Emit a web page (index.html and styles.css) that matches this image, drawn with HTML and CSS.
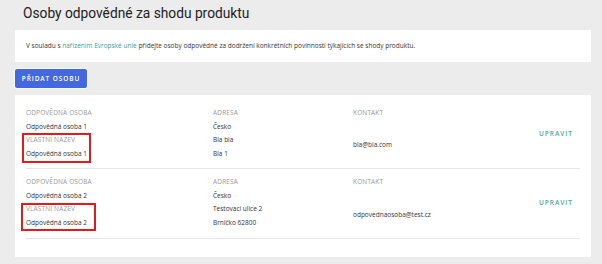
FILE: index.html
```html
<!DOCTYPE html>
<html lang="cs">
    <head>
        <meta charset="UTF-8" />
        <meta name="viewport" content="width=device-width, initial-scale=1.0" />
        <title>Osoby odpovědné za shodu produktu</title>

        <link rel="stylesheet" href="styles.css">
    </head>
    <body>
        <h1 class="page-title">Osoby odpovědné za shodu produktu</h1>

        <div class="panel info">
            V souladu s <a href="#">nařízením Evropské unie</a> přidejte
            osoby odpovědné za dodržení konkrétních povinností týkajících se
            shody produktu.
        </div>

        <button class="add-btn">Přidat osobu</button>

        <div class="panel persons">
            <div class="person">
                <div class="col col-name">
                    <div class="label">Odpovědná osoba</div>
                    <div class="value">Odpovědná osoba 1</div>
                    <div class="mark mark-1">
                        <div class="label">Vlastní název</div>
                        <div class="value">Odpovědná osoba 1</div>
                    </div>
                </div>
                <div class="col col-address">
                    <div class="label">Adresa</div>
                    <div class="value">Česko</div>
                    <div class="value">Bla bla</div>
                    <div class="value">Bla 1</div>
                </div>
                <div class="col col-contact">
                    <div class="label">Kontakt</div>
                    <div class="value email">bla@bla.com</div>
                </div>
                <a class="edit" href="#">Upravit</a>
            </div>

            <div class="person">
                <div class="col col-name">
                    <div class="label">Odpovědná osoba</div>
                    <div class="value">Odpovědná osoba 2</div>
                    <div class="mark mark-2">
                        <div class="label">Vlastní název</div>
                        <div class="value">Odpovědná osoba 2</div>
                    </div>
                </div>
                <div class="col col-address">
                    <div class="label">Adresa</div>
                    <div class="value">Česko</div>
                    <div class="value">Testovací ulice 2</div>
                    <div class="value">Brníčko 62800</div>
                </div>
                <div class="col col-contact">
                    <div class="label">Kontakt</div>
                    <div class="value email">odpovednaosoba@test.cz</div>
                </div>
                <a class="edit" href="#">Upravit</a>
            </div>
        </div>
    </body>
</html>
```

FILE: styles.css
```css
body {
    margin: 0;
    padding: 0 11px 0 15px;
    background: #ececec;
    color: #333;
    font-family: 'Open Sans', sans-serif;
    font-size: 6.5px;
}

.page-title {
    margin: 0;
    padding: 3px 0 0 8px;
    height: 27px;
    box-sizing: border-box;
    font-family: Roboto, sans-serif;
    font-weight: 400;
    font-size: 13.75px;
    line-height: 20px;
    color: #222;
}

.panel {
    background: white;
}

.info {
    padding: 9px 11px;
    line-height: 14px;
    height: 32px;
    box-sizing: border-box;
    margin-top: 3px;
}
.info a {
    color: #3a9b9b;
    text-decoration: none;
}

.add-btn {
    display: block;
    margin-top: 7px;
    width: 72px;
    height: 19px;
    padding: 0;
    border: none;
    border-radius: 2px;
    background: #4468df;
    color: white;
    font-family: inherit;
    font-size: 6.5px;
    font-weight: 600;
    letter-spacing: 0.9px;
    text-transform: uppercase;
    box-shadow: 0 0 1px 1px #fafae0;
    cursor: pointer;
}

.persons {
    margin-top: 7px;
    padding: 5px 11px 18px;
}

.person {
    display: flex;
    padding: 6px 0 8px;
    border-bottom: 1px solid #e6e6e6;
    line-height: 13.5px;
}
.person + .person {
    padding-top: 6px;
    padding-bottom: 9px;
}

.col-name {
    width: 187px;
}
.col-address {
    width: 140px;
}
.col-contact {
    flex: 1;
}

.label {
    color: #999;
    font-size: 6.5px;
    text-transform: uppercase;
    letter-spacing: 0.15px;
}
.value {
    color: #333;
}
.email {
    margin-top: 18px;
}
.person + .person .email {
    margin-top: 19.5px;
}

/* red annotation frame */
.mark {
    position: relative;
}
.mark::before {
    content: '';
    position: absolute;
    border: 2px solid #e31b1b;
    box-sizing: border-box;
}
.mark-1::before {
    top: 0;
    left: -4px;
    width: 69px;
    height: 30px;
}
.mark-2::before {
    top: 1px;
    left: -5px;
    width: 75px;
    height: 28px;
}

.edit {
    align-self: center;
    margin: 2px 7px 0 0;
    color: #4aa3a3;
    font-size: 6.5px;
    font-weight: 600;
    letter-spacing: 1px;
    text-transform: uppercase;
    text-decoration: none;
}
```
